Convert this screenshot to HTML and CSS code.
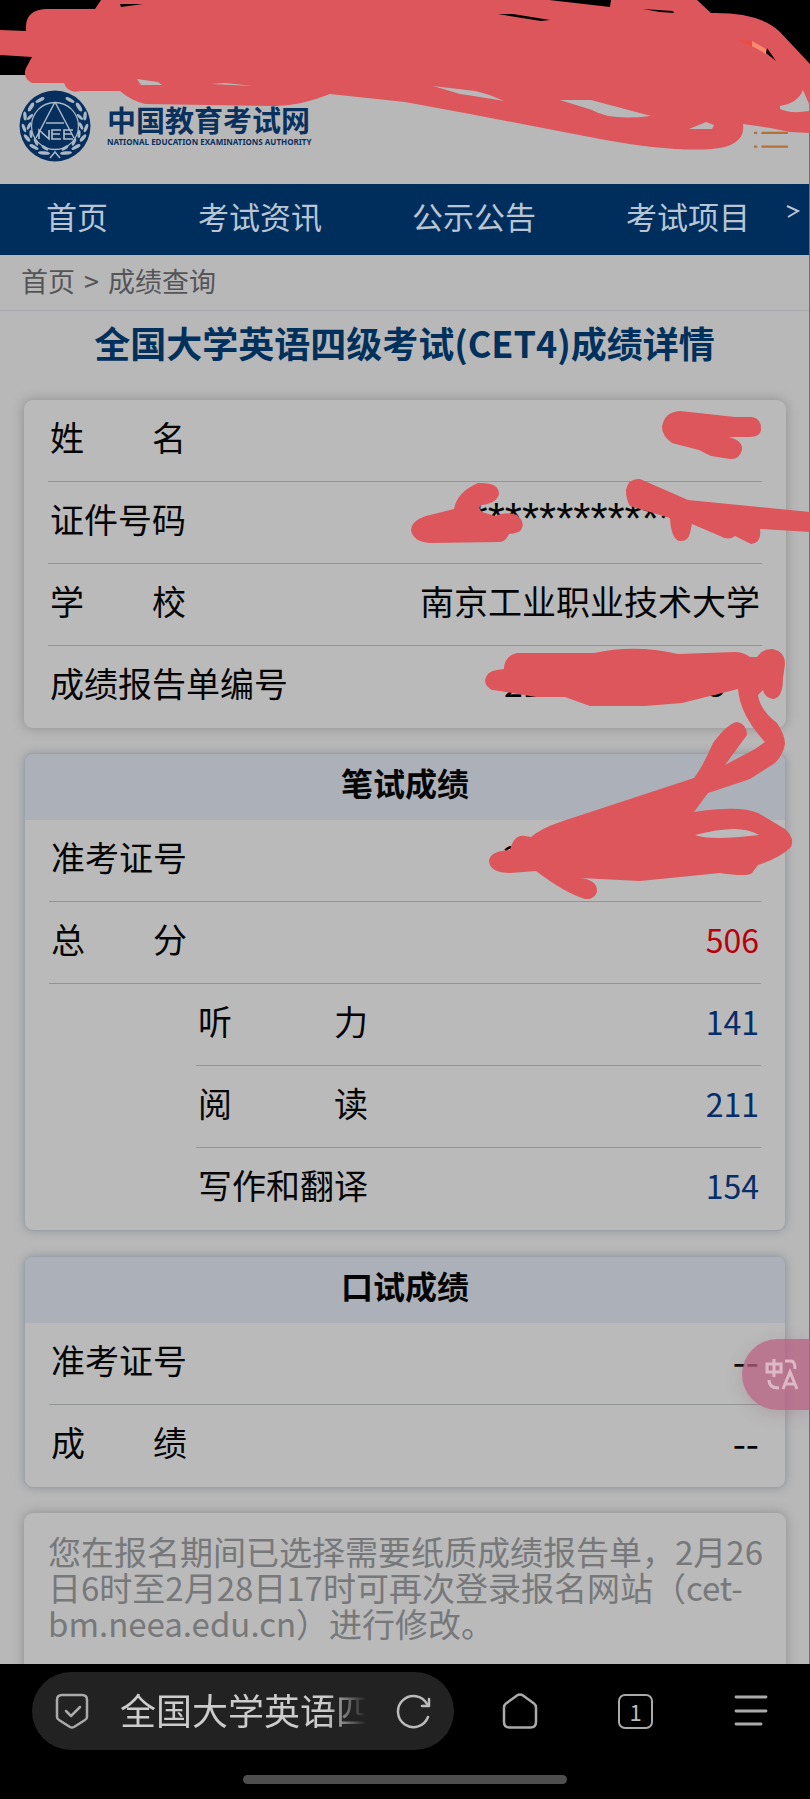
FILE: index.html
```html
<!DOCTYPE html>
<html lang="zh-CN">
<head>
<meta charset="utf-8">
<meta name="viewport" content="width=device-width, initial-scale=1">
<title>全国大学英语四级考试(CET4)成绩详情</title>
<link rel="stylesheet" href="styles.css">
</head>
<body>
<div class="screen">
  <div class="status"></div>
  <div class="page">
    <header class="header">
      <a class="brand" href="#">
        <svg class="emblem" viewBox="0 0 72 72" aria-hidden="true">
          <circle cx="36" cy="36" r="35.500" fill="#062f5e"/>
          <circle cx="36" cy="36" r="23.500" fill="none" stroke="#a9b6c4" stroke-width="1.300"/>
          <path d="M36 12 17 48M36 12l19 36M27 33h18" fill="none" stroke="#a9b6c4" stroke-width="1.500"/>
          <path d="M20 49v-9l10 9v-9M42 40H33v9h9M33 44h8M54 40H45v9h9M45 44h8" fill="none" stroke="#b5bfca" stroke-width="1.600"/>
          <g id="leaves" fill="#aab7c5">
            <ellipse cx="21" cy="10" rx="5" ry="1.800" transform="rotate(-28 21 10)"/>
            <ellipse cx="12" cy="17" rx="5" ry="2" transform="rotate(-58 12 17)"/>
            <ellipse cx="6" cy="26" rx="4.500" ry="1.700" transform="rotate(-95 6 26)"/>
            <ellipse cx="11" cy="27" rx="4" ry="1.500" transform="rotate(-45 11 27)"/>
            <ellipse cx="5" cy="38" rx="4.500" ry="1.700" transform="rotate(70 5 38)"/>
            <ellipse cx="10" cy="36" rx="4" ry="1.500" transform="rotate(-65 10 36)"/>
            <ellipse cx="8" cy="48" rx="4.500" ry="1.800" transform="rotate(50 8 48)"/>
            <ellipse cx="12" cy="44" rx="4" ry="1.500" transform="rotate(-95 12 44)"/>
            <ellipse cx="15" cy="57" rx="5" ry="1.800" transform="rotate(28 15 57)"/>
            <ellipse cx="17" cy="52" rx="4" ry="1.500" transform="rotate(65 17 52)"/>
            <ellipse cx="25" cy="63" rx="6" ry="1.800" transform="rotate(5 25 63)"/>
            <ellipse cx="26" cy="58" rx="4" ry="1.500" transform="rotate(35 26 58)"/>
          </g>
          <use href="#leaves" transform="translate(72 0) scale(-1 1)"/>
          <path d="m31 68 5-6 5 6" fill="none" stroke="#aab7c5" stroke-width="1.500"/>
        </svg>
        <span class="brand-text">
          <strong class="brand-cn">中国教育考试网</strong>
          <span class="brand-en">NATIONAL EDUCATION EXAMINATIONS AUTHORITY</span>
        </span>
      </a>
      <button class="menu" type="button" aria-label="菜单">
        <svg viewBox="0 0 34 30" aria-hidden="true"><path d="M1 2h3M8 2h25M1 15h3M8 15h25M1 28h3M8 28h25" stroke="#b2713a" stroke-width="2"/></svg>
      </button>
    </header>
    <nav class="nav">
      <a href="#">首页</a><a href="#">考试资讯</a><a href="#">公示公告</a><a href="#">考试项目</a>
      <a class="more" href="#" aria-label="更多"><svg viewBox="0 0 14 13" aria-hidden="true"><path d="m1 1 11 5L2 12" fill="none" stroke="#b9c5d4" stroke-width="2"/></svg></a>
    </nav>
    <div class="crumbs"><a href="#">首页</a><span>&gt;</span><a href="#">成绩查询</a></div>
    <h1 class="title">全国大学英语四级考试(CET4)成绩详情</h1>
    <main class="cards">
      <dl class="card">
        <div class="row"><dt>姓　　名</dt><dd></dd></div>
        <div class="row"><dt>证件号码</dt><dd class="stars">************</dd></div>
        <div class="row"><dt>学　　校</dt><dd>南京工业职业技术大学</dd></div>
        <div class="row"><dt>成绩报告单编号</dt><dd class="number"><span>21</span><span>35&nbsp; 0</span></dd></div>
      </dl>
      <section class="card framed">
        <h2>笔试成绩</h2>
        <dl>
          <div class="row"><dt>准考证号</dt><dd class="number"><span>2</span></dd></div>
          <div class="row"><dt>总　　分</dt><dd class="total">506</dd></div>
          <div class="row sub"><dt>听　　　力</dt><dd class="score">141</dd></div>
          <div class="row sub"><dt>阅　　　读</dt><dd class="score">211</dd></div>
          <div class="row sub"><dt>写作和翻译</dt><dd class="score">154</dd></div>
        </dl>
      </section>
      <section class="card framed">
        <h2>口试成绩</h2>
        <dl>
          <div class="row"><dt>准考证号</dt><dd class="dash">--</dd></div>
          <div class="row"><dt>成　　绩</dt><dd class="dash">--</dd></div>
        </dl>
      </section>
      <p class="card note">您在报名期间已选择需要纸质成绩报告单，2月26<br>日6时至2月28日17时可再次登录报名网站（cet-<br>bm.neea.edu.cn）进行修改。</p>
    </main>
  </div>
  <footer class="browser">
    <div class="tools">
      <div class="address">
        <svg class="shield" viewBox="0 0 36 36" fill="none" stroke="#aaa" stroke-width="2.500" stroke-linecap="round" stroke-linejoin="round" aria-hidden="true"><path d="M8 2h20q5 0 5 5v17q0 2-2 3l-11 7q-2 1-4 0L5 27q-2-1-2-3V7q0-5 5-5Z"/><path d="m12 18 5 5 9-9"/></svg>
        <button class="address-text" type="button">全国大学英语四级</button>
        <button class="icon" type="button" aria-label="刷新"><svg viewBox="0 0 36 36" fill="none" stroke="#bbb" stroke-width="2.500" stroke-linecap="round" stroke-linejoin="round"><path d="M32 24A15.500 15.500 0 1 1 31 11"/><path d="M33 6v7h-7"/></svg></button>
      </div>
      <div class="actions">
        <button class="icon" type="button" aria-label="主页"><svg viewBox="0 0 36 36" fill="none" stroke="#aaa" stroke-width="2.500" stroke-linejoin="round"><path d="m15 2.500-11 8q-2 1.500-2 4V29q0 5.500 5.500 5.500h21q5.500 0 5.500-5.500V14.500q0-2.500-2-4l-11-8q-3-2-6 0Z"/></svg></button>
        <button class="tabs" type="button" aria-label="标签页">1</button>
        <button class="icon" type="button" aria-label="更多选项"><svg viewBox="0 0 36 36" fill="none" stroke="#aaa" stroke-width="2.800" stroke-linecap="round"><path d="M3 4h30M3 18h30M3 31h25"/></svg></button>
      </div>
    </div>
    <div class="home-bar"></div>
  </footer>

  <button class="translate" type="button" aria-label="翻译">
    <svg viewBox="0 0 36 36" fill="none" stroke="#ddb9c5" stroke-width="3"><path d="M3 7h14v8H3zM10 2v18M21 4h6q4 0 4 8M5 23q0 8 10 8"/><path d="m19 32 7-17 7 17M21 27h10"/></svg>
  </button>
  <svg class="scribble" viewBox="0 0 810 1799" width="810" height="1799" aria-hidden="true">
    <g fill="#dc565b" fill-rule="evenodd">
      <path d="M0 30 26 31Q24 10 46 9L95 9 101 0H549L610 7 611 0H697L711 13Q760 12 780 32L810 64V133L790 132 770 128 743 124Q746 146 712 149 670 152 600 139L470 114 405 102 330 94Q300 106 275 106L145 104Q130 100 120 91L80 91Q68 94 64 83L32 83Q22 78 26 68L32 57 0 55Z
        M120 4 143 4 121 7ZM498 14 513 14 550 20 541 21ZM643 9 673 11 674 13 660 12Z
        M137 79 158 82 162 85 141 85ZM211 84 225 83 253 86ZM433 86 475 91Q486 93 504 101 480 97 460 94ZM560 100 591 100 651 116Q610 121 592 110ZM689 129 706 122 714 125 712 129ZM780 106Q798 103 803 90L809 104V111Q790 114 780 109Z"/>
      <path d="M680 411 735 417H752Q762 419 761 430 760 437 750 437H728Q743 440 742 450 739 460 730 459L711 456 699 450 672 443Q662 436 662 427 664 412 680 411Z"/>
      <path d="M411 530Q412 519 430 515L454 509Q457 492 478 483 499 482 499 494 497 503 482 505 477 507 482 512L495 516Q505 511 517 515 526 523 521 530 519 533 509 534 506 541 500 542L430 543Q413 542 411 530Z"/>
      <path d="M626 490Q628 478 640 479L688 500 810 512V532L760 529Q762 543 751 544L735 536Q729 541 720 536L692 524 690 533Q688 542 679 541 671 538 670 518L630 506Q626 500 626 490Z"/>
      <path d="M485 680Q487 671 497 670L504 669Q504 656 517 653H594Q635 644 678 654L735 652Q743 652 750 657H757Q763 648 773 649 785 652 785 664L783 678Q783 698 773 699 764 697 763 690L758 695Q760 710 777 723 785 735 785 744 783 755 775 763L750 779 708 793 694 812Q740 805 758 813L785 829Q795 838 791 847 780 858 758 865L752 873Q748 877 720 873L640 881 580 878Q598 880 597 892 594 900 585 899 565 893 536 871L510 873Q490 873 489 861 490 851 510 850 514 834 525 836L531 837Q540 829 560 822L694 778Q702 768 713 743 728 723 737 722 747 724 747 735L725 765 755 749 765 742Q740 715 738 689L682 703 645 706H590L565 697H536L500 691 492 690Q485 686 485 680ZM695 835Q740 823 759 835 710 841 695 835Z"/>
    </g>
    <path d="M738 40 752 41V46Z" fill="#ee4a3d"/><path d="M752 41 766 49V54L752 46Z" fill="#ff8a6d"/><path d="M767 48 776 61 766 53Z" fill="#000"/>
  </svg>
</div>
</body>
</html>
```
FILE: styles.css
```css
* { box-sizing: border-box; }
body {
  margin: 0;
  background: #000;
  color: #050505;
  font-family: "Noto Sans CJK SC", "Noto Sans", sans-serif;
}
h1, h2, p, dl, dd { margin: 0; }
a { color: inherit; text-decoration: none; }
button { padding: 0; border: 0; background: none; color: inherit; font-family: inherit; }
svg { display: block; }

.screen {
  position: relative;
  display: flex;
  flex-direction: column;
  height: 100vh;
  overflow: hidden;
}
.status { flex: none; height: 75px; background: #000; }
.page {
  flex: 1;
  min-height: 0;
  overflow: hidden;
  border-right: 1px solid #6f6f70;
  background: #b8b8b9;
}

.header {
  display: flex;
  align-items: center;
  justify-content: space-between;
  height: 109px;
  padding: 0 20px 8px 19px;
}
.brand { display: flex; align-items: center; gap: 16px; color: #0a315e; }
.emblem { width: 72px; height: 72px; }
.brand-text { display: flex; flex-direction: column; }
.brand-cn { font-size: 29px; line-height: 32px; font-weight: 700; white-space: nowrap; }
.brand-en { font: 700 8px/14px "Noto Sans", sans-serif; white-space: nowrap; }
.menu { width: 36px; padding-top: 14px; }

.nav {
  display: flex;
  align-items: center;
  gap: 90px;
  height: 71px;
  padding: 0 9px 8px 46px;
  background: #002e5c;
  color: #b9c5d4;
  font-size: 31px;
  line-height: 40px;
  white-space: nowrap;
}
.nav .more { width: 14px; margin: 0 0 8px auto; }
.nav a:nth-child(4) { margin-right: -60px; }

.crumbs {
  display: flex;
  align-items: center;
  gap: 9px;
  height: 56px;
  padding: 0 21px 4px;
  border-bottom: 1px solid #a8a9ac;
  color: #555558;
  font-size: 27px;
}
.title {
  padding: 9px 0 36px;
  color: #00305c;
  font-size: 36px;
  line-height: 44px;
  font-weight: 700;
  text-align: center;
  white-space: nowrap;
}

.cards { display: flex; flex-direction: column; gap: 25px; padding: 0 23px 0 24px; }
.card {
  padding: 0 24px;
  border-radius: 9px;
  background: #bababa;
  box-shadow: 0 0 12px #8c8c8c;
}
.framed { border: 1px solid #9ba3ac; box-shadow: 0 0 10px #8f9398; overflow: hidden; }
.framed h2 {
  margin: 0 -24px;
  padding-bottom: 10px;
  background: #acb0b8;
  font-size: 32px;
  line-height: 56px;
  text-align: center;
}
.row {
  display: flex;
  align-items: center;
  justify-content: space-between;
  height: 82px;
  padding: 0 2px 8px;
  border-bottom: 1px solid #929596;
  font-size: 34px;
  line-height: 48px;
  white-space: nowrap;
}
.row:last-child { border-bottom: 0; }
.sub { margin-left: 147px; }
.total, .score { font-size: 32px; }
.total { color: #b8000c; }
.score { color: #052d68; }
.stars { padding-right: 84px; font-family: "Liberation Sans", sans-serif; font-size: 44px; }
.dash { font-size: 38px; }
.number { display: flex; justify-content: space-between; width: 256px; }
.note {
  min-height: 180px;
  padding-top: 20px;
  color: #77787a;
  font-size: 33px;
  line-height: 36px;
  white-space: nowrap;
}

.browser { flex: none; height: 135px; padding-top: 8px; background: #000; }
.tools { display: flex; align-items: center; justify-content: space-between; padding: 0 41px 0 32px; }
.actions { display: flex; align-items: center; gap: 80px; }
.address {
  display: flex;
  align-items: center;
  width: 422px;
  height: 78px;
  padding: 0 22px;
  border-radius: 39px;
  background: #222;
}
.shield { flex: none; width: 36px; height: 36px; }
.address-text {
  flex: 1;
  margin: 0 30px;
  overflow: hidden;
  color: #ccc;
  font-size: 36px;
  line-height: 48px;
  padding-bottom: 4px;
  text-align: left;
  white-space: nowrap;
  -webkit-mask-image: linear-gradient(to right, #000 84%, transparent);
  mask-image: linear-gradient(to right, #000 84%, transparent);
}
.icon { flex: none; width: 36px; height: 36px; }
.tabs {
  width: 35px;
  height: 35px;
  border: 2px solid #aaa;
  border-radius: 7px;
  color: #bbb;
  font-size: 22px;
  line-height: 28px;
}
.home-bar { width: 40%; height: 9px; margin: 25px auto 0; border-radius: 5px; background: #4e4e4e; }

.translate {
  position: absolute;
  top: 1339px;
  right: 0;
  width: 68px;
  height: 71px;
  padding-left: 22px;
  border-radius: 36px 0 0 36px;
  background: rgba(186, 96, 130, .75);
  box-shadow: 0 4px 16px rgba(150, 110, 125, .3);
}
.translate svg { width: 36px; height: 36px; }
.scribble { position: absolute; top: 0; left: 0; pointer-events: none; }
```
